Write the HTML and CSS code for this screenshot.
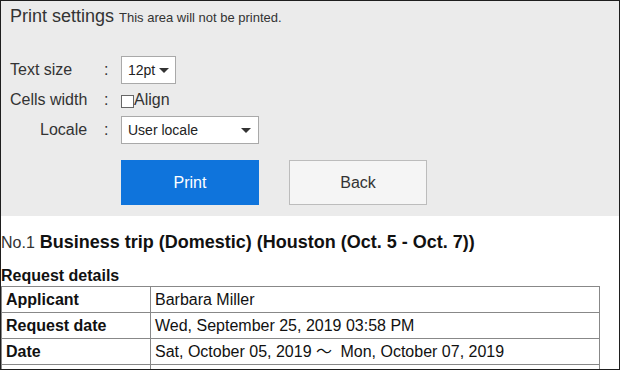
FILE: index.html
```html
<!DOCTYPE html>
<html lang="en">

<head>
  <meta charset="UTF-8">
  <title>Print</title>
  <link rel="stylesheet" href="styles.css">
</head>

<body>
  <div class="page">
    <div class="print-settings">
      <div class="print-title">Print settings <span class="print-note">This area will not be printed.</span></div>

      <div class="setting-rows">
        <div class="setting-row">
          <label class="setting-label">Text size</label>
          <span class="setting-colon">:</span>
          <div class="select select-small">12pt <span class="caret"></span></div>
        </div>
        <div class="setting-row">
          <label class="setting-label">Cells width</label>
          <span class="setting-colon">:</span>
          <label class="check"><span class="check-box"></span>Align</label>
        </div>
        <div class="setting-row">
          <label class="setting-label setting-label-indent">Locale</label>
          <span class="setting-colon">:</span>
          <div class="select select-wide">User locale <span class="caret"></span></div>
        </div>
      </div>

      <div class="print-buttons">
        <button class="btn btn-print">Print</button>
        <button class="btn btn-back">Back</button>
      </div>
    </div>

    <div class="request">
      <div class="request-title"><span class="request-no">No.1</span> Business trip (Domestic) (Houston (Oct. 5 - Oct. 7))</div>
      <div class="request-sub">Request details</div>
      <table class="request-table">
        <tr>
          <th>Applicant</th>
          <td>Barbara Miller</td>
        </tr>
        <tr>
          <th>Request date</th>
          <td>Wed, September 25, 2019 03:58 PM</td>
        </tr>
        <tr>
          <th>Date</th>
          <td>Sat, October 05, 2019 <span class="tilde">～</span> Mon, October 07, 2019</td>
        </tr>
        <tr class="row-empty">
          <th></th>
          <td></td>
        </tr>
      </table>
    </div>
  </div>
</body>

</html>
```

FILE: styles.css
```css
* {
  padding: 0;
  margin: 0;
  box-sizing: border-box;
}

body {
  font-family: "Liberation Sans", Arial, "Noto Sans CJK JP", sans-serif;
  color: #333;
  background: #fff;
}

.page {
  width: 620px;
  height: 370px;
  border: 1px solid #1e1e1e;
  overflow: hidden;
}

/* 打印设置区域 */
.print-settings {
  background: #ebebeb;
  height: 215px;
  padding: 5px 0 0 9px;
}

.print-title {
  font-size: 18px;
  line-height: 21px;
}

.print-note {
  font-size: 13px;
}

.setting-rows {
  margin-top: 28px;
}

.setting-row {
  display: flex;
  align-items: center;
  font-size: 16px;
}

.setting-row + .setting-row {
  margin-top: 4px;
}

.setting-label {
  width: 94px;
}

.setting-label-indent {
  padding-left: 30px;
}

.setting-colon {
  width: 17px;
}

.select {
  display: flex;
  align-items: center;
  height: 28px;
  padding: 0 7px 0 6px;
  background: #fff;
  border: 1px solid #a9a9a9;
  font-size: 14px;
  color: #222;
}

.select-small {
  width: 55px;
  gap: 4px;
}

.select-wide {
  width: 138px;
  justify-content: space-between;
}

.caret {
  width: 0;
  height: 0;
  border-left: 5px solid transparent;
  border-right: 5px solid transparent;
  border-top: 5px solid #333;
}

.check {
  display: flex;
  align-items: center;
  height: 24px;
}

.check-box {
  width: 13px;
  height: 13px;
  background: #fff;
  border: 1px solid #666;
  margin-top: 2px;
}

.print-buttons {
  display: flex;
  gap: 30px;
  margin: 16px 0 0 111px;
}

.btn {
  width: 138px;
  height: 45px;
  font-family: inherit;
  font-size: 16px;
  border: 1px solid #bcbcbc;
}

.btn-print {
  background: #0f74dc;
  border-color: #0f74dc;
  color: #fff;
}

.btn-back {
  background: #f5f5f5;
  color: #333;
}

/* 申请内容 */
.request {
  padding-top: 15px;
  color: #111;
}

.request-title {
  font-size: 18px;
  font-weight: bold;
  line-height: 22px;
}

.request-no {
  font-size: 16px;
  font-weight: normal;
  color: #333;
}

.request-sub {
  margin-top: 12px;
  font-size: 16px;
  font-weight: bold;
  line-height: 20px;
}

.request-table {
  width: 599px;
  border-collapse: collapse;
  font-size: 16px;
}

.request-table th,
.request-table td {
  border: 1px solid #888;
  padding: 4px 4px 3px;
  line-height: 18px;
  text-align: left;
}

.request-table th {
  width: 149px;
  font-weight: bold;
}

.row-empty th,
.row-empty td {
  height: 26px;
}

.tilde {
  margin-right: 4px;
}
```
